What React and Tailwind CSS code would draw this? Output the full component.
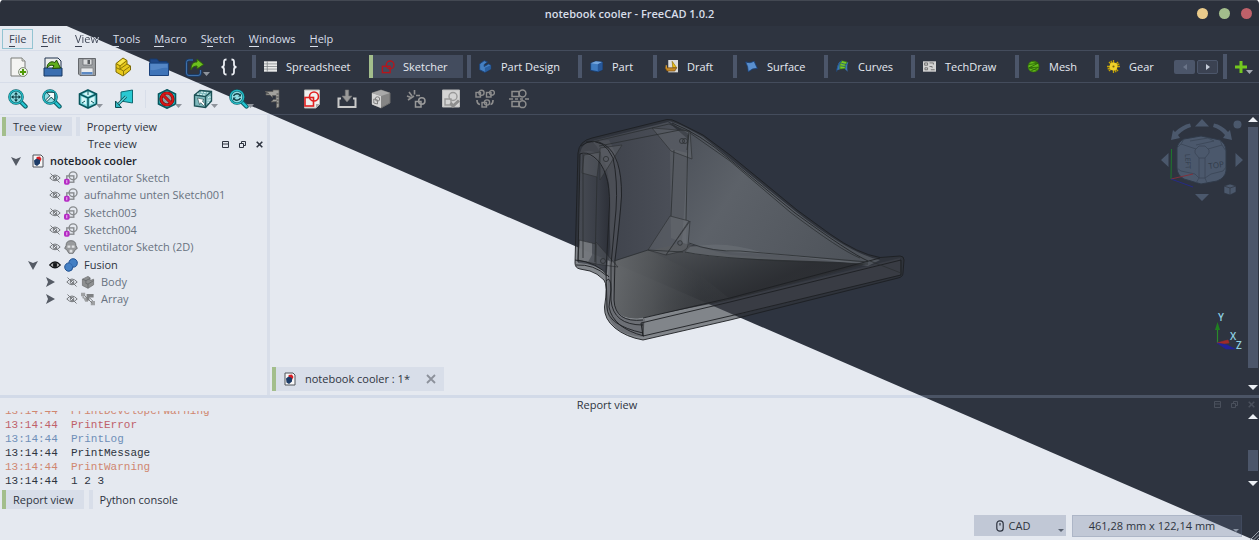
import React from "react";

const DIVIDER = "border-[rgba(159,176,207,0.2)]";

/* ---------- icons ---------- */

function Icon({ children, size = "size-5" }) {
  return (
    <svg viewBox="0 0 20 20" className={`${size} shrink-0`} aria-hidden="true" fill="none">
      {children}
    </svg>
  );
}

const Caret = () => (
  <svg viewBox="0 0 7 4" className="absolute right-0.5 bottom-1.5 h-1 w-[7px]" aria-hidden="true">
    <path d="M0 0H7L3.5 4Z" fill="#8f949c" />
  </svg>
);

const NewIcon = () => (
  <Icon>
    <path d="M2 1H13L16 4V19H2Z" fill="#f4f4f2" stroke="#7b7d78" />
    <path d="M13 1V4H16" fill="#d6d8d2" stroke="#7b7d78" strokeWidth=".8" />
    <circle cx="14" cy="15" r="4.4" fill="#eef3e8" stroke="#7f8c76" />
    <path d="M14 12V18M11 15H17" stroke="#4e9a06" strokeWidth="2" />
  </Icon>
);
const OpenIcon = () => (
  <Icon>
    <path d="M2 1H15L18 4V14H2Z" fill="#eceeec" stroke="#20324e" />
    <path d="M1 11H19V19H1Z" fill="#3a6eb0" stroke="#173660" />
    <path d="M4 11C4 6 8 3.5 12 5.5L13.5 3L17.5 11L9.5 11.5L11 8.7C8 7.5 6 8.5 4 11Z" fill="#5fae1c" stroke="#1f4a0b" />
  </Icon>
);
const SaveIcon = () => (
  <Icon>
    <path d="M1.5 1.5H18.5V18.5H3L1.5 17Z" fill="#9c9fa2" stroke="#65686c" />
    <path d="M6 2H15V8H6Z" fill="#d9dbdd" stroke="#6d7074" strokeWidth=".8" />
    <path d="M10.5 3H13V7H10.5Z" fill="#585c60" />
    <path d="M4 11H16V18H4Z" fill="#e8eaec" stroke="#7c7f82" strokeWidth=".7" />
    <path d="M4.5 15H15.5V17.5H4.5Z" fill="#5c89c4" />
  </Icon>
);
const BlockIcon = () => (
  <Icon>
    <path d="M3 6.500L10 1L14 3.500V7L17.500 9V13L10 19L3 15Z" fill="#e6c81c" stroke="#7d6a06" />
    <path d="M3 6.500L7 9V12L10.500 14V19M7 9L14 3.500M7 12L14 7M10.500 14L17.500 9M3 10.500L7 12.500" stroke="#8c7706" />
    <path d="M4.500 6.300L9.900 2L12.500 3.600L7 7.900Z" fill="#f8e74d" />
  </Icon>
);
const FolderIcon = () => (
  <Icon>
    <path d="M1 2H8L10 4.500H18V9H1Z" fill="#1f4888" stroke="#17386b" />
    <path d="M.5 6H19.500V18.500H.5Z" fill="#3f74b8" stroke="#1b427c" />
    <path d="M1.500 7H18.500V11C12 10 8 14 1.500 13Z" fill="#5486c6" />
  </Icon>
);
const ExportIcon = () => (
  <Icon>
    <path d="M8 3H4Q1.500 3 1.500 5.500V16Q1.500 18.500 4 18.500H13Q15.500 18.500 15.500 16V13" stroke="#173e70" strokeWidth="2.4" />
    <path d="M8 3H4Q1.500 3 1.500 5.500V16Q1.500 18.500 4 18.500H13Q15.500 18.500 15.500 16V13" stroke="#4d7fb8" strokeWidth=".8" />
    <path d="M6 13C6 7 8 5 12 5V2L18.500 7.500L12 12V9C9 9 7.500 10 6 13Z" fill="#6cc01e" stroke="#2e5f0c" />
  </Icon>
);
const BracesIcon = () => (
  <Icon>
    <path d="M7.500 2.500C5 2.500 5 3.500 5 5V7.500Q5 10 2.500 10Q5 10 5 12.500V15C5 16.500 5 17.500 7.500 17.500M12.500 2.500C15 2.500 15 3.500 15 5V7.500Q15 10 17.500 10Q15 10 15 12.500V15C15 16.500 15 17.500 12.500 17.500" stroke="#eceff4" strokeWidth="1.8" />
  </Icon>
);

const Lens = ({ children }) => (
  <Icon>
    <path d="M12 12L17.500 17.500" stroke="#0b5b63" strokeWidth="4.400" strokeLinecap="round" />
    <path d="M12 12L17.500 17.500" stroke="#24c5d1" strokeWidth="2.400" strokeLinecap="round" />
    <circle cx="8" cy="8" r="6.600" fill="#8fdde2" stroke="#0b5b63" strokeWidth="2.400" />
    <circle cx="8" cy="8" r="6.600" stroke="#24b9c4" strokeWidth="1.400" />
    {children}
  </Icon>
);
const FitAllIcon = () => (
  <Lens>
    <path d="M8 3L10 5.500H6ZM8 13L10 10.500H6ZM3 8L5.500 6V10ZM13 8L10.500 6V10Z" fill="#0f3c42" />
    <path d="M8 5V11M5 8H11" stroke="#0f3c42" strokeWidth="1" />
  </Lens>
);
const FitSelIcon = () => (
  <Lens>
    <path d="M4.500 11.500L10 6M7 4.500H11.500V9Z" stroke="#14444a" strokeWidth="2.600" />
    <path d="M4.500 11.500L10 6M7 4.500H11.500V9Z" stroke="#f5ffff" strokeWidth="1.200" fill="#f5ffff" />
  </Lens>
);
const SyncIcon = () => (
  <Lens>
    <path d="M4.500 7Q6 4 9.500 5L11 6M11.500 9Q10 12 6.500 11L5 10" stroke="#14444a" strokeWidth="1.500" />
    <path d="M9 7.500H12V4.500ZM7 8.500H4V11.500Z" fill="#14444a" />
  </Lens>
);
const IsoIcon = () => (
  <Icon>
    <path d="M10 1L18.500 5V15L10 19L1.500 15V5Z" fill="#7ed8de" stroke="#07565d" strokeWidth="1.600" />
    <path d="M1.500 5L10 9L18.500 5M10 9V19" stroke="#07565d" strokeWidth="1.500" />
    <path d="M3.500 7.500L8.300 9.800V15.800L3.500 13.500ZM11.700 9.800L16.500 7.500V13.500L11.700 15.800ZM10 2.800L15 5L10 7.200L5 5Z" fill="#d8f6f8" />
    <path d="M10 2V6M4 14L7 12M16 14L13 12" stroke="#07565d" />
  </Icon>
);
const PlaneIcon = () => (
  <Icon>
    <path d="M7 3L18.500 1V14L7 12Z" fill="#29c9d2" stroke="#0d6a72" />
    <path d="M12 7.500L4 15.500" stroke="#0d4c52" strokeWidth="2.800" />
    <path d="M12 7.500L4 15.500" stroke="#5fe0e7" strokeWidth="1.200" />
    <path d="M1.500 12L7.500 18.500H1.500Z" fill="#2fb7c1" stroke="#0d4c52" />
  </Icon>
);
const NoClipIcon = () => (
  <Icon>
    <path d="M10 .8L18.500 5V15L10 19.200L1.500 15V5Z" fill="#25c3cd" stroke="#07565d" strokeWidth="1.600" />
    <circle cx="10" cy="10" r="6" fill="#8ba1a4" stroke="#7d0808" strokeWidth="3.200" />
    <path d="M6 6L14 14" stroke="#7d0808" strokeWidth="3" />
    <circle cx="10" cy="10" r="6" stroke="#d91616" strokeWidth="1.800" />
    <path d="M6 6L14 14" stroke="#d91616" strokeWidth="1.800" />
  </Icon>
);
const SelBoxIcon = () => (
  <Icon>
    <path d="M7 1.500L18.500 2.500V12L12.500 18.500L1.500 17V6Z" fill="#7fb9bd" stroke="#1d5156" strokeWidth="1.400" />
    <path d="M1.500 6L12.500 7.500V18.500M12.500 7.500L18.500 2.500" stroke="#1d5156" strokeWidth="1.400" />
    <path d="M4 5L12 6M8 3L15 4M15 9L17 7V11L15 14Z" stroke="#d9f3f4" strokeDasharray="2 1" />
    <path d="M4.500 9L11 10.500L9.300 12L12 15L10.500 16.500L7.700 13.700L6.500 15.500Z" fill="#fff" stroke="#24454a" strokeWidth=".6" />
  </Icon>
);
const CaliperIcon = () => (
  <Icon>
    <path d="M1 2.500H9V1H15V18L12.500 19V12.500L7 13L9.500 10.500H12V6.500H8.500V8.500L6 6H2V4.500H5Z" fill="#a2a19d" stroke="#5d5c59" strokeWidth=".7" />
    <path d="M12.500 5H14.500M12.500 8H14.500M12.500 11H14.500M12.500 14H14.500" stroke="#333" strokeWidth=".8" />
  </Icon>
);
const SketchGlyph = ({ color, w = 1.6 }) => (
  <g stroke={color} strokeWidth={w}>
    <rect x="3" y="8.500" width="8.500" height="8.500" />
    <circle cx="12" cy="7.500" r="4.500" />
  </g>
);
const NewSketchIcon = () => (
  <Icon>
    <path d="M2.500 1H17.500V15.500L14 19H2.500Z" fill="#efefed" stroke="#b8b8b5" />
    <path d="M17.500 15H14V19Z" fill="#aaa" />
    <SketchGlyph color="#e02020" w={1.600} />
  </Icon>
);
const ImportIcon = () => (
  <Icon>
    <path d="M4 9.500H1.500V18H18.500V9.500H16" stroke="#c9c9c9" strokeWidth="2" />
    <path d="M8.300 1H11.700V7H15L10 13L5 7H8.300Z" fill="#9a9a9a" stroke="#777" strokeWidth=".6" />
  </Icon>
);
const MapIcon = () => (
  <Icon>
    <path d="M1 4L10 1L19 4V14L10 19L1 15Z" fill="#858585" stroke="#6d6d6d" />
    <path d="M1 4L10 7V19L1 15.500Z" fill="#d6d6d6" />
    <path d="M1 4L10 1L19 4L10 7Z" fill="#a9a9a9" />
    <path d="M2.800 10L6.500 11V15L2.800 14Z" stroke="#808080" />
    <circle cx="6.500" cy="10" r="2.200" stroke="#808080" />
  </Icon>
);
const ReorientIcon = () => (
  <Icon>
    <path d="M2 11L8 7M3 3L6 7M8.500 1V5.500M1 7L5 8.500M10 6.500H14" stroke="#8f8f8f" strokeWidth="1.600" />
    <rect x="9.500" y="12.500" width="5.500" height="5.500" stroke="#999" strokeWidth="1.500" />
    <circle cx="15.800" cy="12" r="3.200" stroke="#999" strokeWidth="1.500" />
  </Icon>
);
const ValidateIcon = () => (
  <Icon>
    <path d="M1.500 1H18.500V18H1.500Z" fill="#d4d4d4" stroke="#bdbdbd" />
    <path d="M4 10H10V16H4Z" stroke="#999" strokeWidth="1.400" />
    <circle cx="12" cy="7.500" r="4" stroke="#999" strokeWidth="1.400" />
    <path d="M9.500 14L12 17L18 11.500" stroke="#8e8e8e" strokeWidth="3" />
  </Icon>
);
const MergeIcon = () => (
  <Icon>
    <g stroke="#8d8d8d" strokeWidth="1.400">
      <rect x="1" y="3.500" width="4.500" height="4.500" />
      <circle cx="6.500" cy="3.800" r="2.600" />
      <rect x="11.500" y="3.500" width="4.500" height="4.500" />
      <circle cx="17" cy="3.800" r="2.400" />
      <rect x="7" y="13.500" width="4.500" height="4.500" />
      <circle cx="12" cy="13.500" r="2.600" />
      <path d="M2 11Q2 15 5 15.500M18 11Q18 15 15.500 15.500" strokeWidth="1.700" />
    </g>
  </Icon>
);
const MirrorIcon = () => (
  <Icon>
    <g stroke="#8d8d8d" strokeWidth="1.500">
      <rect x="3" y="2.500" width="7" height="5" />
      <circle cx="13.500" cy="4.500" r="3.400" />
      <rect x="3" y="12.500" width="7" height="5" />
      <circle cx="13.500" cy="15.200" r="3.400" />
      <path d="M0 10H4M6 10H9M11 10H14M16 10H20" />
    </g>
  </Icon>
);

const SheetIcon = () => (
  <Icon size="size-[13px]">
    <path d="M0 2H20V18H0Z" fill="#e9eaea" />
    <path d="M0 6H20M0 10H20M0 14H20M5 2V18" stroke="#767b80" strokeWidth="1.100" />
  </Icon>
);
const SketcherIcon = () => (
  <Icon size="size-3.5">
    <rect x="2" y="9" width="11" height="9" stroke="#b5161c" strokeWidth="2" />
    <circle cx="13" cy="7" r="5.500" stroke="#b5161c" strokeWidth="2" />
  </Icon>
);
const PartDesignIcon = () => (
  <Icon size="size-[13px]">
    <path d="M1 6L8 1L13 3L8 7V10L15 6L18 8V14L9 19L1 15Z" fill="#4580c2" stroke="#1c467e" strokeWidth="1.400" />
    <path d="M9 12L18 8V14L9 19Z" fill="#2a5fa0" />
  </Icon>
);
const PartIcon = () => (
  <Icon size="size-[13px]">
    <path d="M1 5L9 2L19 3V15L12 18L1 16Z" fill="#3f7bc0" stroke="#163d70" strokeWidth="1.300" />
    <path d="M1 5L9 2L19 3L12 6.500Z" fill="#74a5dc" />
    <path d="M12 6.500L19 3V15L12 18Z" fill="#27589a" />
  </Icon>
);
const DraftIcon = () => (
  <Icon size="size-[13px]">
    <path d="M5 0H20V19H5Z" fill="#dcdcda" />
    <path d="M11 2L12 12H18Z" fill="#f0c316" stroke="#8a6b05" />
    <path d="M0 12H18L15 17H3Z" fill="#c78a26" stroke="#6b430c" />
    <path d="M2 8V13" stroke="#d89a2c" strokeWidth="2" />
  </Icon>
);
const SurfaceIcon = () => (
  <Icon size="size-[13px]">
    <path d="M1 3Q8 6 14 2L19 13Q12 12 5 18Q5 10 1 3Z" fill="#5a8fce" stroke="#1a4480" strokeWidth="1.200" />
  </Icon>
);
const CurvesIcon = () => (
  <Icon size="size-[13px]">
    <path d="M1 16Q2 3 9 1L19 4Q16 9 18 18L13 13L7 14Z" fill="#3b77b7" />
    <path d="M6 14Q5 5 9 1L17 3Q13 8 14 13Z" fill="#7acb22" stroke="#33740a" />
    <path d="M1 18Q2 6 9 1M8 5L16 7M7 9L14 10" stroke="#1e4f8a" strokeWidth="1.200" />
  </Icon>
);
const TechDrawIcon = () => (
  <Icon size="size-[13px]">
    <path d="M0 2H20V18H0Z" fill="#d2d2d2" />
    <path d="M2.500 4.500H7V8H2.500ZM10 4.500H16V7M3 12H7V15H3ZM10 10H14V12M12 15H18" stroke="#656565" strokeWidth="1.300" />
  </Icon>
);
const MeshIcon = () => (
  <Icon size="size-[13px]">
    <circle cx="10" cy="10" r="8.500" fill="#62b81b" stroke="#2e6a08" />
    <path d="M2 7L17 5L3 12L18 11L6 17M8 2L17 5M3 12L16 16" stroke="#2e6a08" strokeWidth="1.400" />
  </Icon>
);
const GearIcon = () => (
  <Icon size="size-[13px]">
    <path d="M10 0V20M0 10H20M3 3L17 17M17 3L3 17M6 1L14 19M1 14L19 6" stroke="#c4a206" strokeWidth="2" />
    <circle cx="10" cy="10" r="6" fill="#efd02a" />
    <circle cx="10" cy="10" r="1.600" fill="#7a6408" />
  </Icon>
);
const DocIcon = () => (
  <svg viewBox="0 0 12 14" className="h-3.5 w-3 shrink-0" aria-hidden="true">
    <path d="M1 1H9L11 3V13H1Z" fill="#f7f7f7" stroke="#50545a" />
    <path d="M4.500 3L8 2.500L9.500 5L8 8L5 7Z" fill="#d81f26" />
    <path d="M2 6.500L4.500 4.500L8 6V9.500L5 12L2.500 10.500Z" fill="#1c3c68" />
  </svg>
);

/* ---------- tree icons ---------- */

const EyeOff = () => (
  <svg viewBox="0 0 12 10" className="h-2.5 w-3 shrink-0" aria-hidden="true" fill="none" stroke="#777a7e">
    <path d="M.8 5Q6-1 11.200 5Q6 10.500 .8 5Z" />
    <circle cx="6" cy="5" r="1.800" />
    <path d="M1.500 .5L10.500 9.500" />
  </svg>
);
const EyeOn = () => (
  <svg viewBox="0 0 12 10" className="h-2.5 w-3 shrink-0" aria-hidden="true" fill="none" stroke="#15171a">
    <path d="M.8 5Q6-1 11.200 5Q6 10.500 .8 5Z" fill="#fff" strokeWidth="1.300" />
    <circle cx="6" cy="5" r="2" fill="#15171a" />
  </svg>
);
const TreeSketch = () => (
  <Icon size="size-3.5">
    <rect x="4" y="7" width="10" height="9" stroke="#888b8e" strokeWidth="2" />
    <circle cx="13" cy="6.800" r="5.600" stroke="#888b8e" strokeWidth="2" />
    <rect x="0" y="11" width="8" height="8.500" rx="2.500" fill="#b52bc4" />
    <path d="M4 13V17.500" stroke="#f2c4f6" strokeWidth="1.400" />
  </Icon>
);
const CloneIcon = () => (
  <Icon size="size-3.5">
    <path d="M3 8Q3 1 10 1Q17 1 17 8L19 12L16 14L13 19H7L4 14L1 12Z" fill="#999b9d" stroke="#727476" strokeWidth="1.400" />
    <path d="M5 8H9V11H5ZM11 8H15V11H11ZM8 14H12V18H8Z" fill="#e0e2e4" />
  </Icon>
);
const FusionIcon = () => (
  <Icon size="size-3.5">
    <path d="M1 13A6 6 0 0 1 7 7A6 6 0 0 1 13 1A6 6 0 0 1 19 8A6 6 0 0 1 12.500 13A6 6 0 0 1 7 19A6 6 0 0 1 1 13Z" fill="#4480c4" stroke="#1f5090" strokeWidth="1.400" />
    <path d="M7 7Q12 8 12.500 13" stroke="#2d62a6" />
  </Icon>
);
const BodyIcon = () => (
  <Icon size="size-3.5">
    <path d="M2 6L10 2L13 4V8L18 6V14L10 19L2 15Z" fill="#8d8f90" stroke="#6b6d6f" />
    <path d="M2 6L7 8V12L10 13V19M7 8L13 5M10 13L18 8" stroke="#5f6163" />
  </Icon>
);
const ArrayIcon = () => (
  <Icon size="size-3.5">
    <path d="M0 1H6V6H0ZM14 13H20V19H14ZM3 8H10V14H6Z" fill="#9fa1a3" />
    <path d="M8 3H18V8H12V12H8Z" fill="#7e8082" />
    <path d="M5 5L16 16M3 6V9M12 8L17 13" stroke="#77797b" strokeWidth="1.300" />
  </Icon>
);

/* ---------- data ---------- */

const MENUS = ["File", "Edit", "View", "Tools", "Macro", "Sketch", "Windows", "Help"];

const FILE_TOOLS = [
  { label: "New", icon: NewIcon },
  { label: "Open", icon: OpenIcon },
  { label: "Save", icon: SaveIcon },
  { label: "Create part", icon: BlockIcon, space: "ml-0.5" },
  { label: "Create group", icon: FolderIcon, space: "ml-0.5" },
  { label: "Make link", icon: ExportIcon, space: "ml-0.5", menu: true },
  { label: "Expression", icon: BracesIcon },
];

const VIEW_TOOLS = [
  { label: "Fit all", icon: FitAllIcon },
  { label: "Fit selection", icon: FitSelIcon },
  { label: "Isometric", icon: IsoIcon, space: "ml-0.5", menu: true },
  { label: "Align to plane", icon: PlaneIcon, space: "ml-0.5" },
];

const DRAW_TOOLS = [
  { label: "Draw style", icon: NoClipIcon, menu: true },
  { label: "Bounding box", icon: SelBoxIcon, space: "ml-0.5", menu: true },
  { label: "Sync view", icon: SyncIcon, space: "ml-0.5", menu: true },
  { label: "Measure", icon: CaliperIcon, space: "ml-px" },
  { label: "Create sketch", icon: NewSketchIcon, space: "ml-1" },
  { label: "Edit sketch", icon: ImportIcon, space: "ml-px" },
  { label: "Attach sketch", icon: MapIcon },
  { label: "Reorient sketch", icon: ReorientIcon, space: "ml-px" },
  { label: "Validate sketch", icon: ValidateIcon, space: "ml-px" },
  { label: "Merge sketches", icon: MergeIcon },
  { label: "Mirror sketch", icon: MirrorIcon },
];

const WORKBENCHES = [
  { label: "Spreadsheet", icon: SheetIcon, width: "w-[117px]" },
  { label: "Sketcher", icon: SketcherIcon, width: "w-[98px]", active: true },
  { label: "Part Design", icon: PartDesignIcon, width: "w-[111px]" },
  { label: "Part", icon: PartIcon, width: "w-[75px]" },
  { label: "Draft", icon: DraftIcon, width: "w-20" },
  { label: "Surface", icon: SurfaceIcon, width: "w-[91px]" },
  { label: "Curves", icon: CurvesIcon, width: "w-[87px]" },
  { label: "TechDraw", icon: TechDrawIcon, width: "w-[104px]" },
  { label: "Mesh", icon: MeshIcon, width: "w-20" },
  { label: "Gear", icon: GearIcon, width: "w-[75px]" },
];

const TREE = [
  { label: "notebook cooler", icon: DocIcon, pad: "pl-2.5", open: true, tone: "text-[#20242c] font-semibold" },
  { label: "ventilator Sketch", icon: TreeSketch, pad: "pl-[49px]", eye: EyeOff },
  { label: "aufnahme unten Sketch001", icon: TreeSketch, pad: "pl-[49px]", eye: EyeOff },
  { label: "Sketch003", icon: TreeSketch, pad: "pl-[49px]", eye: EyeOff },
  { label: "Sketch004", icon: TreeSketch, pad: "pl-[49px]", eye: EyeOff },
  { label: "ventilator Sketch (2D)", icon: CloneIcon, pad: "pl-[49px]", eye: EyeOff },
  { label: "Fusion", icon: FusionIcon, pad: "pl-[27px]", eye: EyeOn, open: true, tone: "text-[#2e3440] font-medium" },
  { label: "Body", icon: BodyIcon, pad: "pl-11", eye: EyeOff, open: false },
  { label: "Array", icon: ArrayIcon, pad: "pl-11", eye: EyeOff, open: false },
];

const LOG = [
  { text: "PrintDeveloperWarning", color: "text-[#d08770]" },
  { text: "PrintError", color: "text-[#bf616a]" },
  { text: "PrintLog", color: "text-[#6f8fb8]" },
  { text: "PrintMessage", color: "text-[#2e3440]" },
  { text: "PrintWarning", color: "text-[#d08770]" },
  { text: "1 2 3", color: "text-[#2e3440]" },
];

/* ---------- widgets ---------- */

function Tool({ tool }) {
  const Glyph = tool.icon;
  return (
    <button
      type="button"
      aria-label={tool.label}
      className={`relative flex h-[31px] w-[34px] shrink-0 items-center justify-center ${tool.space || ""}`}
    >
      <Glyph />
      {tool.menu && <Caret />}
    </button>
  );
}

function SideTab({ label, active }) {
  return (
    <button
      type="button"
      className={`h-[19px] border-l-4 pr-2.5 pl-[7px] ${
        active ? "border-[#a3be8c] bg-[#d8dee9]" : "border-[#d8dee9]"
      }`}
    >
      {label}
    </button>
  );
}

function PanelButtons() {
  return (
    <div className="flex items-center gap-2.5">
      <button type="button" aria-label="Minimize panel">
        <svg viewBox="0 0 7 7" className="size-[7px]" fill="none" stroke="currentColor">
          <path d="M.5 .5H6.500V6.500H.5ZM.5 3H6.500" />
        </svg>
      </button>
      <button type="button" aria-label="Detach panel">
        <svg viewBox="0 0 7 7" className="size-[7px]" fill="none" stroke="currentColor">
          <path d="M.5 2.500H4.500V6.500H.5ZM2.500 2.500V.5H6.500V4.500H4.500" />
        </svg>
      </button>
      <button type="button" aria-label="Close panel">
        <svg viewBox="0 0 7 7" className="size-[7px]" fill="none" stroke="currentColor" strokeWidth="1.600">
          <path d="M.7 .7L6.300 6.300M6.300 .7L.7 6.300" />
        </svg>
      </button>
    </div>
  );
}

const ScrollArrow = ({ down }) => (
  <svg viewBox="0 0 10 5" className="h-[5px] w-2.5 shrink-0" aria-hidden="true">
    <path d={down ? "M0 0H10L5 5Z" : "M0 5H10L5 0Z"} fill="#eceff4" />
  </svg>
);

/* ---------- 3D scene ---------- */

function Model() {
  return (
    <svg
      viewBox="570 115 340 230"
      className="absolute top-0 left-[300px] h-[230px] w-[340px]"
      role="img"
      aria-label="Cooler housing"
      fill="none"
      strokeLinejoin="round"
    >
      <defs>
        <linearGradient id="wall" x1="640" y1="130" x2="850" y2="260" gradientUnits="userSpaceOnUse">
          <stop offset="0" stopColor="#454a53" />
          <stop offset=".45" stopColor="#5f646b" />
          <stop offset="1" stopColor="#50555c" />
        </linearGradient>
        <linearGradient id="floor" x1="690" y1="245" x2="715" y2="305" gradientUnits="userSpaceOnUse">
          <stop offset="0" stopColor="#4d5054" stopOpacity=".9" />
          <stop offset=".7" stopColor="#34373b" stopOpacity=".9" />
          <stop offset="1" stopColor="#2c2e32" stopOpacity=".85" />
        </linearGradient>
        <linearGradient id="floorLeft" x1="605" y1="290" x2="700" y2="290" gradientUnits="userSpaceOnUse">
          <stop offset="0" stopColor="#6c6f72" stopOpacity=".85" />
          <stop offset=".5" stopColor="#55585b" stopOpacity=".75" />
          <stop offset="1" stopColor="#3b3e42" stopOpacity=".3" />
        </linearGradient>
        <linearGradient id="back" x1="612" y1="180" x2="670" y2="180" gradientUnits="userSpaceOnUse">
          <stop offset="0" stopColor="#42464f" />
          <stop offset="1" stopColor="#4d515a" />
        </linearGradient>
        <linearGradient id="side" x1="578" y1="200" x2="611" y2="200" gradientUnits="userSpaceOnUse">
          <stop offset="0" stopColor="#4b4f57" />
          <stop offset=".6" stopColor="#3b3f48" />
          <stop offset="1" stopColor="#2b2e36" />
        </linearGradient>
      </defs>

      <path
        d="M575 263L578 153Q579 141 592 138L667 119.500Q672 119 677 122L703 135L730 155L763 182L797 210L830 234Q858 254 880 257.500L900 256Q904 256 904 260L903 273Q903 277 898 278L730 320L643 340Q626 337 615 328Q604 319 604.500 307Q608 285 604 280Q597 273 590 271L580 269Q575 268 575 263Z"
        fill="#303338"
        fillOpacity=".54"
      />
      <path d="M592 141L668 122L689 140V250L612 262L606 170Q602 150 592 141Z" fill="url(#back)" fillOpacity=".9" />
      <path d="M668 121Q677 122 703 137L795 211Q850 254 880 260L868 266Q790 254 730 252L682 243L689 134Z" fill="url(#wall)" fillOpacity=".95" />
      <path d="M648 251L682 243L730 255L866 264L730 300L640 318Q618 320 614 304L614 262Z" fill="url(#floor)" />
      <path d="M612 262L648 250L700 275L730 299L640 318Q618 320 614 304Z" fill="url(#floorLeft)" />
      <path d="M578 263L580 154Q595 144 606 165Q612 190 610 225L607 274Q597 264 578 263Z" fill="url(#side)" fillOpacity=".88" />
      <path d="M580 240L592 243V255L588 262L578 260Z" fill="#85888b" fillOpacity=".7" />
      <path d="M580 153Q583 141 593 141L609 140Q622 162 621 200L614 265L615 308Q623 323 645 319L643 337Q610 335 606 307L610 245L609 185Q604 157 580 153Z" fill="#55585d" fillOpacity=".5" />
      <path d="M690 247Q724 240 760 252L866 263L730 258Q700 256 685 252Z" fill="#6a6f74" fillOpacity=".65" />
      <path d="M670 149L688 153L686 244L671 238Z" fill="#73777b" fillOpacity=".28" />
      <path d="M643 321L900 258V275L643 338Z" fill="#777b80" fillOpacity=".14" />

      <g fill="#777b7e" fillOpacity=".26" stroke="#2f3235" strokeWidth=".7">
        <path d="M652 128L690 131L692 159L671 151Z" />
        <path d="M648 250L670 216L689 221L666 255Z" />
        <path d="M666 255L690 221L688 245Q687 251 679 252Z" />
        <path d="M600 180V148L622 145Z" />
        <path d="M582 173L584 155L600 152L597 177Z" />
        <path d="M596 242L618 267L595 264Z" />
        <path d="M579 240L596 244V264L578 260Z" />
      </g>

      <g stroke="#1d1f22" strokeWidth=".9">
        <path d="M575 263L578 153Q579 141 592 138L667 119.500Q672 119 677 122L703 135L730 155L763 182L797 210L830 234Q858 254 880 257.500L900 256Q904 256 904 260L903 273Q903 277 898 278L730 320L643 340Q626 337 615 328Q604 319 604.500 307Q608 285 604 280Q597 273 590 271L580 269Q575 268 575 263Z" />
        <path d="M578 262L580 154Q586 151 594 157Q610 169 609.500 205L606 272L607 307Q607 325 643 333" />
        <path d="M581 146Q593 137 605 145Q622 156 621.500 196Q620 220 615 260L614 300Q615 323 643 320" />
        <path d="M586 142Q604 138 613 158Q618 180 616 210L611 265V300Q613 325 643 325" />
        <path d="M606 281Q611 275 611 290L609 307Q613 328 644 336" />
        <path d="M643 318L730 298L880 258M641 323L730 302L901 260V275L730 316L643 336Z" />
        <path d="M643 323V336M575 260Q598 262 609 277M576 265Q594 264 607 276" />
        <path d="M672 123Q700 134 728 158L795 213Q850 253 868 261" strokeWidth=".8" />
      </g>
      <g stroke="#2b2e31" strokeWidth=".8">
        <path d="M592 142L669 124L689 132L687 150M599 146L680 130M597 177L595 262M583 154V258" />
        <path d="M674 150L671 216M688 135L686 220M614 261L648 250L683 252M689 243Q712 252 740 251L868 262" />
        <path d="M685 252Q720 260 868 264M690 133L730 161L790 212Q840 250 860 258M870 261L901 273" />
        <circle cx="682" cy="141" r="2.500" />
        <circle cx="685" cy="141" r="2.500" />
        <circle cx="680" cy="243" r="2.300" />
        <circle cx="606" cy="159" r="2.600" />
        <circle cx="603" cy="261" r="2.500" />
      </g>
    </svg>
  );
}

function NavCube() {
  return (
    <svg viewBox="1155 115 90 90" className="absolute top-0 right-px size-[90px]" role="img" aria-label="Navigation cube" fill="none">
      <g fill="#4b586c">
        <path d="M1195 126.500H1209L1202 119ZM1195 194H1209L1202 201ZM1161 160L1168.500 153V167ZM1243 160L1235.500 153V167Z" />
        <circle cx="1237.500" cy="124.500" r="4" />
        <path d="M1171 140L1173 130L1175 132Q1182 125 1190 123.500L1191 127Q1184 129 1178 135L1180 138ZM1232 140L1230 130L1228 132Q1222 125 1214 123.500L1213 127Q1220 129 1225 135L1223 138Z" />
        <path d="M1224 186L1230 184L1236 186V192L1230 195L1224 193Z" stroke="#2e3440" strokeWidth=".6" />
      </g>
      <path d="M1224 186L1230 188L1236 186M1230 188V195" stroke="#2e3440" strokeWidth=".7" />
      <path
        d="M1184 139L1201 136L1220 140Q1226 144 1226 151V171Q1225 178 1217 181L1201 184L1184 179Q1177 175 1177 168V148Q1178 142 1184 139Z"
        fill="#4b586c"
        stroke="#303a49"
      />
      <path
        d="M1195 150L1199 146H1205L1209 150V153L1205 158H1199L1195 153ZM1177 148L1181 144L1196 149M1208 149L1222 145L1226 151M1199 158V178L1195 174L1181 171L1177 168M1205 158V178L1211 174L1223 171L1226 167M1199 178H1205L1207 183M1199 178L1196 183M1184 139L1181 144M1220 140L1222 145M1190 141L1208 138L1214 141L1196 145"
        stroke="#3a4556"
        strokeWidth=".8"
      />
      <text x="1209" y="169" fontSize="8" fill="#303a49" transform="rotate(-8 1209 169)">TOP</text>
      <text x="1185" y="154" fontSize="7" fill="#303a49" transform="rotate(87 1185 154)">LEFT</text>
      <path d="M1171 179L1171.500 149" stroke="#1c7a2c" />
      <path d="M1171 179L1193 174" stroke="#80303c" />
      <path d="M1171 179L1193 187" stroke="#252a86" />
    </svg>
  );
}

function AxisCross() {
  return (
    <svg viewBox="1210 310 36 44" className="absolute right-0 bottom-3.5 h-11 w-9" role="img" aria-label="Axis cross" fontSize="10" fontWeight="600">
      <path d="M1217.500 344V330" stroke="#2b8a2b" strokeWidth="1.200" />
      <path d="M1217.500 323L1220 331H1215Z" fill="#208020" />
      <path d="M1217 344L1224 342L1228 341L1229 344L1224 344.500Z" fill="#a02a2a" stroke="#a02a2a" strokeWidth=".6" />
      <path d="M1217 344L1227 346L1235 350L1226 350Z" fill="#22229c" stroke="#22229c" strokeWidth=".6" />
      <text x="1218" y="322" fill="#8ed0e2">Y</text>
      <text x="1230" y="341" fill="#8ed0e2">X</text>
      <text x="1236" y="350" fill="#8ed0e2">Z</text>
    </svg>
  );
}

/* ---------- page ---------- */

export default function App() {
  return (
    <div className="bg-white">
      <div className="relative isolate flex min-h-screen flex-col overflow-hidden rounded-t bg-[#e5e9f0] font-['Open_Sans','Noto_Sans',sans-serif] text-[11px] leading-4 text-[#2e3440]">
        <div className="absolute inset-0 -z-10 bg-[#2e3440] [clip-path:polygon(5.3%_26px,100%_26px,100%_100%,99.6%_100%)]" />

        <header className="flex h-[26px] items-center border-t border-[#434852] bg-[#2b303b] pr-[7px] pl-[62px]">
          <h1 className="flex-1 text-center font-semibold text-[#d8dee9]">notebook cooler - FreeCAD 1.0.2</h1>
          <div className="flex gap-[11px]">
            <button type="button" aria-label="Minimize" className="size-[11px] rounded-full bg-[#ebcb8b]" />
            <button type="button" aria-label="Maximize" className="size-[11px] rounded-full bg-[#a3be8c]" />
            <button type="button" aria-label="Close" className="size-[11px] rounded-full bg-[#bf616a]" />
          </div>
        </header>

        <nav className={`flex h-[25px] items-center border-b pt-px pl-0.5 ${DIVIDER}`}>
          {MENUS.map((name, i) => {
            const at = name === "Sketch" ? 1 : 0;
            const tone =
              i < 2
                ? "text-[#3b4252]"
                : i === 2
                  ? "bg-[linear-gradient(23.4deg,#3b4252_calc(50%+3px),#d8dee9_calc(50%+3px))] bg-clip-text text-transparent"
                  : "text-[#d8dee9]";
            return (
              <button
                key={name}
                type="button"
                className={`h-5 border px-1.5 ${i === 0 ? "mr-px border-[#93c4d2]" : "border-transparent"}`}
              >
                <span className={tone}>
                  {name.slice(0, at)}
                  <span className={i === 2 ? "border-b border-[#3b4252]" : "border-b border-current"}>{name[at]}</span>
                  {name.slice(at + 1)}
                </span>
              </button>
            );
          })}
        </nav>

        <div className={`flex h-8 items-center border-b pr-1.5 pl-0.5 ${DIVIDER}`}>
          {FILE_TOOLS.map((t) => (
            <Tool key={t.label} tool={t} />
          ))}
          <div className="ml-1.5 flex flex-1 text-[#e5e9f0]">
            {WORKBENCHES.map((w) => {
              const Glyph = w.icon;
              return (
                <div key={w.label} className={`${w.width} shrink-0 pr-1`}>
                  <button
                    type="button"
                    className={`flex h-[23px] w-full items-center border-l-4 pl-2 whitespace-nowrap ${
                      w.active ? "border-[#a3be8c] bg-[#434c5e]" : "border-[#4c566a]"
                    }`}
                  >
                    <span className="flex w-[22px] shrink-0">
                      <Glyph />
                    </span>
                    {w.label}
                  </button>
                </div>
              );
            })}
          </div>
          <div className="flex items-center gap-0.5">
            <button type="button" aria-label="Previous tabs" className="flex h-[14px] w-[21px] items-center justify-center rounded-xs bg-[#4c566a]">
              <svg viewBox="0 0 4 6" className="h-1.5 w-1"><path d="M4 0V6L0 3Z" fill="#6b7589" /></svg>
            </button>
            <button type="button" aria-label="Next tabs" className="flex h-[14px] w-[21px] items-center justify-center rounded-xs border border-[#4c566a] bg-[#3b4252]">
              <svg viewBox="0 0 4 6" className="h-1.5 w-1"><path d="M0 0V6L4 3Z" fill="#c5ccd8" /></svg>
            </button>
          </div>
          <div className="ml-[5px] h-[25px] w-1 bg-[#4c566a]" />
          <button type="button" aria-label="Add workbench" className="relative ml-2 flex h-[31px] w-[18px] items-center">
            <svg viewBox="0 0 12 12" className="size-3"><path d="M4.500 0H7.500V4.500H12V7.500H7.500V12H4.500V7.500H0V4.500H4.500Z" fill="#73c81e" /></svg>
            <svg viewBox="0 0 7 4" className="absolute right-0 bottom-2 h-1 w-[7px]"><path d="M0 0H7L3.500 4Z" fill="#a3a8b1" /></svg>
          </button>
        </div>

        <div className={`flex h-8 items-center border-b pl-px ${DIVIDER}`}>
          {VIEW_TOOLS.map((t) => (
            <Tool key={t.label} tool={t} />
          ))}
          <div className="mr-1 ml-1 h-[18px] w-px bg-[#d8dee9]" />
          {DRAW_TOOLS.map((t) => (
            <Tool key={t.label} tool={t} />
          ))}
        </div>

        <main className="flex min-h-[280px] flex-1">
          <aside className="w-[267px] shrink-0 pt-0.5">
            <div className="flex gap-1 pl-0.5">
              <SideTab label="Tree view" active />
              <SideTab label="Property view" />
            </div>
            <div className="flex h-4 items-center pr-1 pl-[88px]">
              <h2 className="flex-1">Tree view</h2>
              <PanelButtons />
            </div>
            <ul className="grid h-[156px] grid-rows-9">
              {TREE.map((n) => {
                const Glyph = n.icon;
                const Eye = n.eye;
                return (
                  <li key={n.label} className={`flex items-center ${n.pad} ${n.tone || "font-medium text-[#68727f]"}`}>
                    {n.open !== undefined && (
                      <button type="button" aria-label={`Toggle ${n.label}`} className="mr-2.5 flex w-3 justify-center">
                        <svg viewBox="0 0 10 10" className={`size-2.5 ${n.open ? "rotate-90" : ""}`}>
                          <path d="M1 0L10 5L1 10L3 5Z" fill="#555b65" />
                        </svg>
                      </button>
                    )}
                    {Eye && (
                      <span className="mr-[3px] flex">
                        <Eye />
                      </span>
                    )}
                    <span className="mr-1.5 flex">
                      <Glyph />
                    </span>
                    {n.label}
                  </li>
                );
              })}
            </ul>
          </aside>
          <div className="w-[3px] bg-[#d8dee9]" />
          <section className="flex min-w-0 flex-1 flex-col">
            <div className="relative flex-1">
              <Model />
              <NavCube />
              <AxisCross />
            </div>
            <div className="flex pb-1 pl-0.5">
              <div className="flex h-6 items-center border-l-4 border-[#a3be8c] bg-[#d8dee9] px-2">
                <DocIcon />
                <button type="button" className="mr-4 ml-[9px] w-[105px] text-left whitespace-nowrap">notebook cooler : 1*</button>
                <button type="button" aria-label="Close document">
                  <svg viewBox="0 0 10 10" className="size-2.5" stroke="#8c919b" strokeWidth="1.800">
                    <path d="M1 1L9 9M9 1L1 9" />
                  </svg>
                </button>
              </div>
            </div>
          </section>
          <div className="flex w-[13px] flex-col items-center gap-[5px] pt-0.5 pb-[5px]">
            <ScrollArrow />
            <div className="mb-3 w-2.5 flex-1 bg-[#4c566a]" />
            <ScrollArrow down />
          </div>
        </main>

        <div className="h-[3px] bg-[rgba(159,176,207,0.26)]" />

        <section>
          <div className="flex h-[13px] items-center pr-1">
            <h2 className="flex-1 text-center">Report view</h2>
            <div className="text-[#4a505c]">
              <PanelButtons />
            </div>
          </div>
          <div className="flex h-[77px]">
            <div className="flex flex-1 flex-col justify-end overflow-hidden pl-[5px] font-['Liberation_Mono',monospace] leading-[14px]">
              {LOG.map((l) => (
                <p key={l.text} className={`h-3.5 shrink-0 whitespace-pre ${l.color}`}>{`13:14:44  ${l.text}`}</p>
              ))}
            </div>
            <div className="flex w-[13px] flex-col items-center justify-end pt-[3px] pb-0.5">
              <ScrollArrow />
              <div className="flex flex-1 flex-col justify-end pb-2.5">
                <div className="h-[21px] w-2.5 bg-[#4c566a]" />
              </div>
              <ScrollArrow down />
            </div>
          </div>
          <div className="flex gap-[5px] pt-0.5 pl-0.5">
            <SideTab label="Report view" active />
            <SideTab label="Python console" />
          </div>
        </section>

        <footer className="flex h-[31px] items-center justify-end gap-1.5 pt-0.5 pr-[17px]">
          <button type="button" className="relative flex h-[21px] w-[92px] items-center justify-center gap-[5px] bg-[rgba(94,110,140,0.26)] pr-3.5">
            <svg viewBox="0 0 8 12" className="h-3 w-2" fill="none" stroke="#2e3440" strokeWidth="1.200">
              <rect x=".8" y=".8" width="6.400" height="10.400" rx="3" />
              <path d="M4 3V5.500" />
            </svg>
            CAD
            <svg viewBox="0 0 6 3" className="absolute right-0.5 bottom-1 h-[3px] w-1.5"><path d="M0 0H6L3 3Z" fill="#5a6372" /></svg>
          </button>
          <button type="button" className="relative h-[22px] w-[170px] border border-[rgba(94,110,140,0.2)] bg-[rgba(94,110,140,0.26)] pr-2.5">
            461,28 mm x 122,14 mm
            <svg viewBox="0 0 6 3" className="absolute right-0.5 bottom-1 h-[3px] w-1.5"><path d="M0 0H6L3 3Z" fill="#8a93a3" /></svg>
          </button>
        </footer>
        <svg viewBox="0 0 10 10" className="absolute right-0 bottom-0 size-2.5" stroke="#9aa0aa" aria-hidden="true">
          <path d="M1 10L10 1M4.500 10L10 4.500M8 10L10 8" />
        </svg>
      </div>
    </div>
  );
}
